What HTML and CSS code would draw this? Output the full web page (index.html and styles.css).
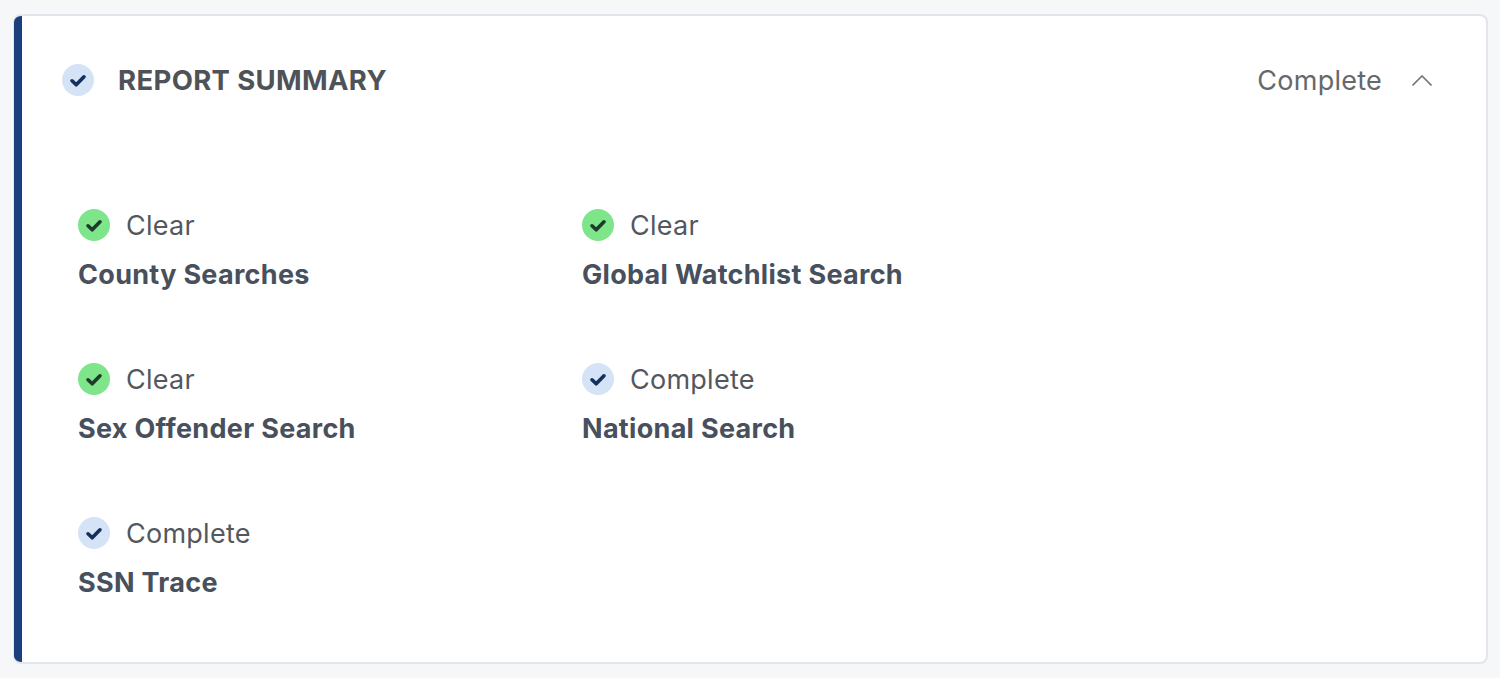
FILE: index.html
```html
<!DOCTYPE html>
<html lang="en">
<head>
    <meta charset="UTF-8">
    <meta name="viewport" content="width=device-width, initial-scale=1.0">
    <title>Report Summary</title>
    <link rel="stylesheet" href="styles.css">
</head>
<body>
    <section class="card">
        <div class="card-inner">
            <header class="card-header">
                <span class="status-icon status-complete">
                    <svg viewBox="0 0 16 16"><path d="M5 8.4l2.1 2 3.9-4"/></svg>
                </span>
                <h2 class="card-title">REPORT SUMMARY</h2>
                <span class="card-status">Complete</span>
                <svg class="chevron" viewBox="0 0 20 12"><path d="M0.5 11.5L10 2l9.5 9.5"/></svg>
            </header>
            <div class="summary-grid">
                <div class="summary-item">
                    <div class="summary-status">
                        <span class="status-icon status-clear">
                            <svg viewBox="0 0 16 16"><path d="M5 8.4l2.1 2 3.9-4"/></svg>
                        </span>
                        Clear
                    </div>
                    <div class="summary-name">County Searches</div>
                </div>
                <div class="summary-item">
                    <div class="summary-status">
                        <span class="status-icon status-clear">
                            <svg viewBox="0 0 16 16"><path d="M5 8.4l2.1 2 3.9-4"/></svg>
                        </span>
                        Clear
                    </div>
                    <div class="summary-name">Global Watchlist Search</div>
                </div>
                <div class="summary-item">
                    <div class="summary-status">
                        <span class="status-icon status-clear">
                            <svg viewBox="0 0 16 16"><path d="M5 8.4l2.1 2 3.9-4"/></svg>
                        </span>
                        Clear
                    </div>
                    <div class="summary-name">Sex Offender Search</div>
                </div>
                <div class="summary-item">
                    <div class="summary-status">
                        <span class="status-icon status-complete">
                            <svg viewBox="0 0 16 16"><path d="M5 8.4l2.1 2 3.9-4"/></svg>
                        </span>
                        Complete
                    </div>
                    <div class="summary-name">National Search</div>
                </div>
                <div class="summary-item">
                    <div class="summary-status">
                        <span class="status-icon status-complete">
                            <svg viewBox="0 0 16 16"><path d="M5 8.4l2.1 2 3.9-4"/></svg>
                        </span>
                        Complete
                    </div>
                    <div class="summary-name">SSN Trace</div>
                </div>
            </div>
        </div>
    </section>
</body>
</html>
```

FILE: styles.css
```css
body {
    margin: 0;
    padding: 14px 12px 14px 13px;
    background-color: #f6f7f9;
    font-family: 'Inter', 'Liberation Sans', sans-serif;
    overflow: hidden;
}
.card {
    height: 650px;
    box-sizing: border-box;
    background: #fff;
    border: 2px solid #e3e5ec;
    border-left-width: 1px;
    border-radius: 8px;
    overflow: hidden;
}
.card-inner {
    height: 100%;
    border-left: 8px solid #1a3f7c;
}
.card-header {
    display: flex;
    align-items: center;
    height: 32px;
    padding: 48px 52px 0 40px;
}
.card-title {
    flex: 1;
    margin: 0 0 0 24px;
    font-size: 27.5px;
    letter-spacing: 0.35px;
    font-weight: 700;
    color: #4f5257;
}
.card-status {
    font-size: 27px;
    letter-spacing: 0.25px;
    color: #65686c;
}
.chevron {
    width: 20px;
    height: 12px;
    margin-left: 30px;
    margin-right: 2px;
    fill: none;
    stroke: #77797d;
    stroke-width: 1.6;
}
.status-icon {
    display: inline-flex;
    flex: none;
    width: 32px;
    height: 32px;
    border-radius: 50%;
}
.status-icon svg {
    width: 32px;
    height: 32px;
    fill: none;
    stroke-width: 1.8;
    stroke-linecap: round;
    stroke-linejoin: round;
}
.status-complete {
    background-color: #d5e3f6;
}
.status-complete svg {
    stroke: #14305f;
}
.status-clear {
    background-color: #7ee58a;
}
.status-clear svg {
    stroke: #1f3a2a;
}
.summary-grid {
    display: grid;
    grid-template-columns: 504px 504px;
    grid-auto-rows: 154px;
    padding: 113px 0 0 56px;
}
.summary-status {
    display: flex;
    align-items: center;
    gap: 16px;
    height: 32px;
    font-size: 27px;
    letter-spacing: 0.25px;
    color: #54585e;
}
.summary-name {
    margin-top: 18px;
    font-size: 27px;
    letter-spacing: 0.3px;
    line-height: 32px;
    font-weight: 700;
    color: #47505c;
}
```
